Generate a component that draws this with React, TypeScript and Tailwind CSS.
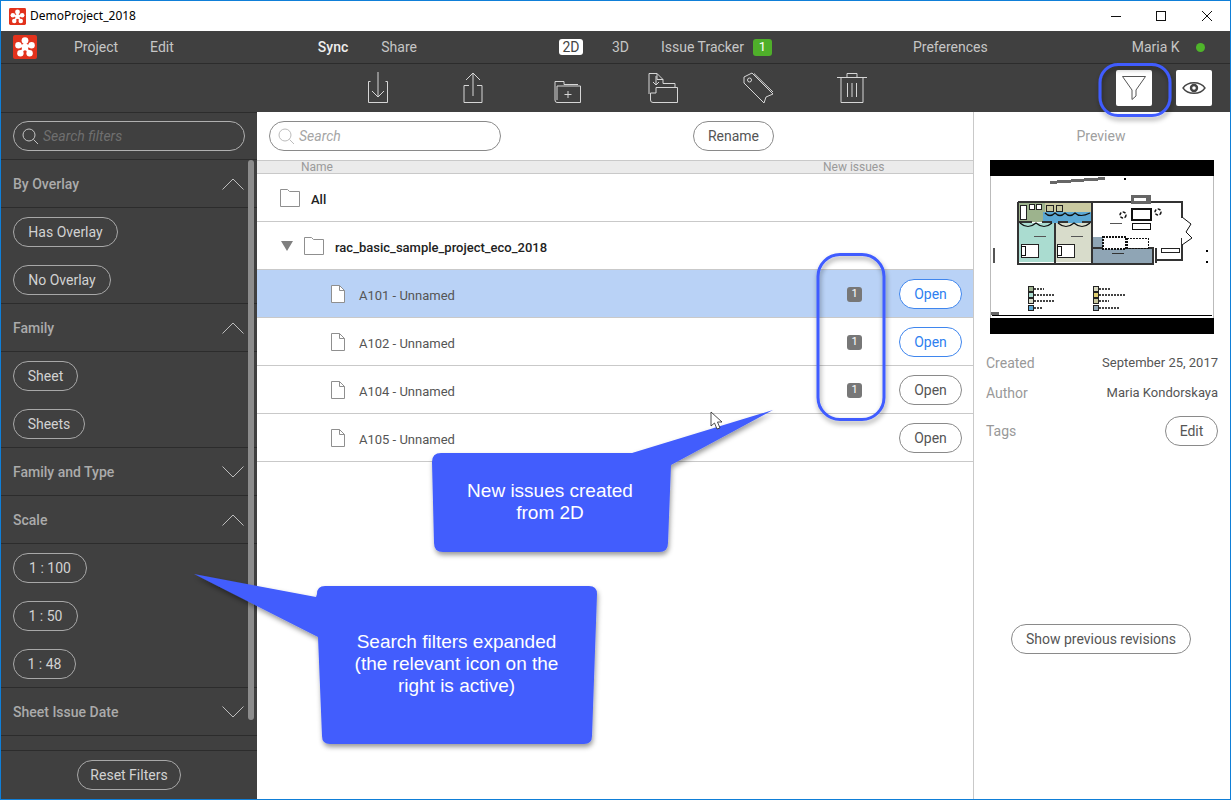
const roboto = { fontFamily: 'Roboto, sans-serif' }

function Logo({ size }: { size: number }) {
  return (
    <svg width={size} height={size} viewBox="0 0 24 24">
      <rect width="24" height="24" rx="2" fill="#e2321c" />
      <g fill="#fff">
        <circle cx="12" cy="5.6" r="3.4" />
        <circle cx="5.4" cy="10.2" r="3.2" />
        <circle cx="18.6" cy="10.2" r="3.2" />
        <circle cx="7.4" cy="18.2" r="3.2" />
        <circle cx="16.6" cy="18.2" r="3.2" />
        <circle cx="12" cy="12" r="3.4" />
      </g>
      <g stroke="#fff" strokeWidth="2.4">
        <path d="M12 12 L12 6 M12 12 L5.5 10 M12 12 L18.5 10 M12 12 L7.5 18 M12 12 L16.5 18" />
      </g>
    </svg>
  )
}

function ToolIcon({ children }: { children: React.ReactNode }) {
  return (
    <div className="w-[94.8px] flex justify-center">
      <svg width="32" height="32" viewBox="0 0 32 32" fill="none" stroke="#d6d6d6" strokeWidth="1">
        {children}
      </svg>
    </div>
  )
}

function Pill({ label, className = '' }: { label: string; className?: string }) {
  return (
    <div className={`h-[30px] inline-flex items-center justify-center rounded-full border border-[#a8a8a8] text-[14px] text-[#d2d2d2] ${className}`}>
      {label}
    </div>
  )
}

function FilterHead({ label, open }: { label: string; open: boolean }) {
  return (
    <div className="h-12 shrink-0 flex items-center pl-[12px] pr-[12px] border-b border-[#2c2c2c]">
      <span className="pt-[1px] text-[14px] font-medium text-[#ababab]">{label}</span>
      <svg className="ml-auto" width="24" height="14" viewBox="0 0 24 14" fill="none" stroke="#bdbdbd" strokeWidth="1">
        <path d={open ? 'M1.5 12.5 L12 2 L22.5 12.5' : 'M1.5 1.5 L12 12 L22.5 1.5'} />
      </svg>
    </div>
  )
}

function FilterOption({ label, width, last }: { label: string; width: string; last?: boolean }) {
  return (
    <div className={`h-12 shrink-0 flex items-center pl-[12px] ${last ? 'pt-[1px] border-b border-[#2c2c2c]' : ''}`}>
      <Pill label={label} className={width} />
    </div>
  )
}

function FolderIcon() {
  return (
    <svg width="20" height="18" viewBox="0 0 20 18" fill="none" stroke="#8f8f8f" strokeWidth="1">
      <path d="M0.5 0.5 H7.5 L9.5 2.5 H19.5 V17.5 H0.5 Z" />
    </svg>
  )
}

function FileIcon() {
  return (
    <svg width="14" height="18" viewBox="0 0 14 18" fill="#fff" stroke="#8f8f8f" strokeWidth="1">
      <path d="M0.5 0.5 H8.5 L13.5 5.5 V17.5 H0.5 Z" />
      <path d="M8.5 0.5 V5.5 H13.5" fill="none" />
    </svg>
  )
}

function SheetRow({ name, issue, active, blue }: { name: string; issue?: boolean; active?: boolean; blue?: boolean }) {
  return (
    <div className={`h-12 shrink-0 flex items-center pt-[1px] border-b border-[#c9c9c9] ${active ? 'bg-[#b9d2f6]' : ''}`}>
      <div className="ml-[74px] flex"><FileIcon /></div>
      <span className="ml-[14px] pt-[3px] text-[13px] text-[#555]">{name}</span>
      <div className="ml-auto w-[15px] h-[15px] mr-[37px] flex items-center justify-center">
        {issue && (
          <span className="w-[15px] h-[15px] rounded-[3px] bg-[#777] text-white text-[11px] flex items-center justify-center">1</span>
        )}
      </div>
      <div className={`w-[63px] h-[30px] mr-[11px] rounded-full border flex items-center justify-center text-[14px] ${blue ? 'border-[#3f86ee] text-[#2f7ff0] bg-white' : 'border-[#8a8a8a] text-[#555]'}`}>
        Open
      </div>
    </div>
  )
}

function SearchGlyph({ color }: { color: string }) {
  return (
    <svg width="17" height="17" viewBox="0 0 17 17" fill="none" stroke={color} strokeWidth="1">
      <circle cx="7" cy="7" r="6" />
      <path d="M11.5 11.5 L16 16" />
    </svg>
  )
}

const legend: [number, number, string, number][] = [
  [38, 126, '#9db38d', 10],
  [38, 132, '#aadcd0', 20],
  [38, 138, '#d8dccb', 20],
  [38, 145, '#5ba8d4', 8],
  [103, 126, '#d8d8c0', 12],
  [103, 132, '#e0cf70', 27],
  [103, 138, '#c9c9a0', 10],
  [103, 145, '#8fa5b5', 20],
]

function Plan() {
  return (
    <svg className="w-[224px] h-[174px] block" viewBox="0 0 224 174" shapeRendering="crispEdges">
      <rect x="0.5" y="0.5" width="223" height="173" fill="#fff" stroke="#bbb" />
      <rect width="224" height="16" fill="#000" />
      <rect y="158" width="224" height="16" fill="#000" />
      <rect y="155" x="2" width="220" height="1" fill="#000" />
      <rect y="152" x="1" width="8" height="3" fill="#666" />
      <path d="M60 21 L115 17 L115 20 L60 24 Z" fill="#666" />
      <rect x="134" y="18" width="2" height="2" fill="#000" />
      <rect x="3" y="88" width="2" height="15" fill="#555" />
      <rect x="216" y="90" width="2" height="2" fill="#000" />
      <rect x="216" y="101" width="2" height="2" fill="#000" />

      <rect x="29" y="43" width="26" height="19" fill="#9db38d" />
      <rect x="55" y="43" width="47" height="10" fill="#c9c9a0" />
      <rect x="53" y="52" width="49" height="11" fill="#5ba8d4" />
      <rect x="29" y="63" width="35" height="39" fill="#aadcd0" />
      <rect x="66" y="63" width="35" height="39" fill="#d8dccb" />
      <rect x="103" y="88" width="60" height="15" fill="#8fa5b5" />
      <rect x="103" y="77" width="10" height="11" fill="#8fa5b5" />
      <g fill="none" stroke="#333" strokeWidth="2">
        <path d="M28 42 H192 V58 M192 78 V100 H166 M166 88 V103" />
        <path d="M28 42 V104 H163 V88 H103" />
        <path d="M65 63 V103 M102 42 V103" />
        <path d="M29 62 H42 M52 62 H62 M68 62 H78 M92 62 H101" strokeWidth="1.5" />
      </g>
      <path d="M192 57 L201 64 L196 72 L202 78 L192 85" fill="#fff" stroke="#111" strokeWidth="1" shapeRendering="auto" />
      <rect x="141" y="35" width="20" height="9" fill="#666" />
      <rect x="144" y="38" width="12" height="3" fill="#fff" />
      <rect x="30" y="45" width="6" height="14" fill="#fff" stroke="#222" />
      <rect x="39" y="44" width="5" height="5" fill="#fff" stroke="#222" />
      <rect x="46" y="44" width="5" height="5" fill="#fff" stroke="#222" />
      <rect x="56" y="45" width="7" height="6" fill="none" stroke="#222" />
      <rect x="66" y="45" width="6" height="6" fill="none" stroke="#222" />
      <path d="M30 63 Q38 70 46 63 Q54 70 62 63 M68 63 Q76 70 84 63 Q92 70 100 63 M55 53 Q60 58 65 53 Q70 58 75 53 Q80 58 85 53 Q90 58 100 53" fill="none" stroke="#111" strokeWidth="1.2" shapeRendering="auto" />
      <rect x="31" y="84" width="17" height="13" fill="#fff" stroke="#222" />
      <rect x="67" y="84" width="17" height="13" fill="#fff" stroke="#222" />
      <rect x="31" y="86" width="4" height="9" fill="none" stroke="#111" />
      <rect x="67" y="86" width="4" height="9" fill="none" stroke="#111" />
      <rect x="142" y="49" width="19" height="11" fill="#fff" stroke="#111" strokeWidth="2" />
      <rect x="142" y="63" width="18" height="6" fill="#fff" stroke="#111" />
      <circle cx="133" cy="55" r="3" fill="none" stroke="#111" strokeWidth="1.5" strokeDasharray="3 1.5" shapeRendering="auto" />
      <circle cx="168" cy="52" r="3" fill="none" stroke="#111" strokeWidth="1.5" strokeDasharray="3 1.5" shapeRendering="auto" />
      <rect x="113" y="77" width="23" height="12" fill="#fff" stroke="#111" strokeWidth="2" strokeDasharray="2 1" />
      <rect x="137" y="78" width="21" height="10" fill="#fff" stroke="#111" strokeDasharray="2 1" />
      <rect x="171" y="88" width="18" height="4" fill="#fff" stroke="#222" />
      <rect x="122" y="93" width="12" height="1" fill="#333" />
      <rect x="44" y="76" width="12" height="1" fill="#555" />
      <rect x="81" y="76" width="12" height="1" fill="#555" />
      <rect x="120" y="63" width="12" height="1" fill="#555" />
      {legend.map(([x, y, c, w]) => (
        <g key={`${x}-${y}`}>
          <rect x={x} y={y} width="5" height="5" fill={c} stroke="#222" />
          <path d={`M${x + 6} ${y + 3} h${w}`} stroke="#444" strokeWidth="2" strokeDasharray="2 1" />
        </g>
      ))}
    </svg>
  )
}

export default function App() {
  return (
    <div className="relative w-[1231px] h-[800px] overflow-hidden bg-white border border-[#0f7fd8] flex flex-col" style={roboto}>
      {/* title bar */}
      <div className="h-[30px] flex items-center pl-2 shrink-0">
        <Logo size={17} />
        <span className="ml-[4px] text-[12px] text-black" style={{ fontFamily: '"Noto Sans", sans-serif' }}>DemoProject_2018</span>
        <svg className="ml-auto mr-[18px]" width="101" height="12" viewBox="0 0 101 12" fill="none" stroke="#111" strokeWidth="1">
          <path d="M0 6.5 H10" />
          <rect x="45.5" y="1.5" width="9" height="9" />
          <path d="M91 1 L101 11 M101 1 L91 11" />
        </svg>
      </div>

      {/* menu */}
      <div className="h-[33px] bg-[#404040] border-b border-[#2c2c2c] flex items-center text-[14px] text-[#c6c6c6] shrink-0">
        <div className="ml-3 flex"><Logo size={24} /></div>
        <span className="ml-[37px]">Project</span>
        <span className="ml-[32px]">Edit</span>
        <span className="ml-[144px] font-medium text-[#eee]">Sync</span>
        <span className="ml-[33px]">Share</span>
        <span className="ml-[142px] w-[24px] h-[16px] rounded-[3px] bg-white text-[#444] flex items-center justify-center">2D</span>
        <span className="ml-[29px]">3D</span>
        <span className="ml-[32px]">Issue Tracker</span>
        <span className="ml-[9px] w-[19px] h-[17px] rounded-[3px] bg-[#4faf2a] text-white text-[13px] flex items-center justify-center">1</span>
        <span className="ml-[141px]">Preferences</span>
        <span className="ml-[144px]">Maria K</span>
        <span className="ml-[16px] w-[9px] h-[9px] rounded-full bg-[#4fb52a]" />
      </div>

      {/* toolbar */}
      <div className="h-[48px] bg-[#404040] flex items-center shrink-0 pl-[330px] pr-[18px]">
        <ToolIcon>
          <path d="M8.5 9.5 H6.5 V30.5 H25.5 V9.5 H23.5" />
          <path d="M16 0 V25 M10 19 L16 25 L22 19" />
        </ToolIcon>
        <ToolIcon>
          <path d="M12 13.5 H7 V30.5 H25 V13.5 H20" />
          <path d="M16 1 V24 M9 8 L16 1 L23 8" />
        </ToolIcon>
        <ToolIcon>
          <path d="M3 28 V9.5 H12 V12.5 H26 M3 28 Q3 30.5 5 30.5 H28.5 V14 H5 V28" />
          <path d="M12.5 22.5 H19.5 M16 19 V26" />
        </ToolIcon>
        <ToolIcon>
          <path d="M2 22 V1.5 H10 L16 7.5 V11.5 H28 V15.5" />
          <path d="M10 1.5 V7.5 H16" />
          <path d="M9 15.5 H30.5 V30.5 H6 Q3.5 30.5 3.5 28 V21 H9 Z" />
          <path d="M9 4 V13 M6 10 L9 13 L12 10" />
        </ToolIcon>
        <ToolIcon>
          <path d="M2 5 L10 1 L31 22 L24 25 L22 31 L2 11 Z" />
          <circle cx="7.5" cy="8" r="2" />
          <path d="M12 1.5 L31 20" />
        </ToolIcon>
        <ToolIcon>
          <path d="M1 5.5 H31 M11 5.5 V1.5 H21 V5.5" />
          <path d="M5 5.5 V30.5 H27 V5.5" />
          <path d="M11.5 11 V25 M16 11 V25 M20.5 11 V25" />
        </ToolIcon>
        <div className="ml-auto w-[36px] h-[36px] bg-white rounded-[2px] flex items-center justify-center">
          <svg width="24" height="24" viewBox="0 0 24 24" fill="none" stroke="#555" strokeWidth="1">
            <path d="M0.5 0.5 H23.5 L14 14 V20 L10 23.5 V14 Z" />
          </svg>
        </div>
        <div className="ml-[24px] w-[36px] h-[36px] bg-white rounded-[2px] flex items-center justify-center">
          <svg width="24" height="16" viewBox="0 0 24 16" fill="none" stroke="#444" strokeWidth="1.3">
            <path d="M1 8 C6 1 18 1 23 8 C18 15 6 15 1 8 Z" />
            <circle cx="12" cy="8" r="3" strokeWidth="2.4" />
          </svg>
        </div>
      </div>

      <div className="flex flex-1 min-h-0">
        {/* filters */}
        <div className="w-[256px] shrink-0 bg-[#404040] flex flex-col relative">
          <div className="h-12 flex items-center pl-3 border-y border-[#2c2c2c] shrink-0">
            <div className="w-[232px] h-[30px] rounded-full border border-[#b0b0b0] flex items-center pl-2 gap-[4px]">
              <SearchGlyph color="#c4c4c4" />
              <span className="text-[14px] italic text-[#6f6f6f]">Search filters</span>
            </div>
          </div>
          <FilterHead label="By Overlay" open />
          <FilterOption label="Has Overlay" width="w-[105px]" />
          <FilterOption label="No Overlay" width="w-[98px]" last />
          <FilterHead label="Family" open />
          <FilterOption label="Sheet" width="w-[65px]" />
          <FilterOption label="Sheets" width="w-[72px]" last />
          <FilterHead label="Family and Type" open={false} />
          <FilterHead label="Scale" open />
          <FilterOption label="1 : 100" width="w-[74px]" />
          <FilterOption label="1 : 50" width="w-[65px]" />
          <FilterOption label="1 : 48" width="w-[63px]" last />
          <FilterHead label="Sheet Issue Date" open={false} />
          <div className="flex-1 border-b border-[#2c2c2c]" />
          <div className="h-12 flex items-center justify-center shrink-0">
            <Pill label="Reset Filters" className="w-[104px]" />
          </div>
          <div className="absolute left-[247px] top-[48px] w-[6px] h-[560px] rounded-[3px] bg-[#8c8c8c]" />
        </div>

        {/* sheet list */}
        <div className="w-[717px] shrink-0 flex flex-col border-r border-[#c9c9c9]">
          <div className="h-12 flex items-center pl-3 shrink-0">
            <div className="w-[232px] h-[30px] rounded-full border border-[#8a8a8a] flex items-center pl-2 gap-[4px]">
              <SearchGlyph color="#bcbcbc" />
              <span className="text-[14px] italic text-[#a5a5a5]">Search</span>
            </div>
            <div className="ml-[192px] w-[81px] h-[30px] rounded-full border border-[#8a8a8a] flex items-center justify-center text-[14px] text-[#555]">
              Rename
            </div>
          </div>
          <div className="h-[14px] bg-[#ebebeb] border-y border-[#c9c9c9] flex items-center text-[12px] text-[#9a9a9a] shrink-0">
            <span className="ml-[44px]">Name</span>
            <span className="ml-[490px]">New issues</span>
          </div>
          <div className="h-12 flex items-center border-b border-[#c9c9c9] pl-[23px] shrink-0">
            <FolderIcon />
            <span className="ml-[11px] pt-[4px] text-[13px] font-medium text-[#222]">All</span>
          </div>
          <div className="h-12 flex items-center border-b border-[#c9c9c9] pl-[24px] shrink-0">
            <svg width="12" height="10" viewBox="0 0 12 10"><path d="M0 0 H12 L6 10 Z" fill="#808080" /></svg>
            <div className="ml-[11px] flex"><FolderIcon /></div>
            <span className="ml-[11px] pt-[4px] text-[13px] font-medium text-[#222]">rac_basic_sample_project_eco_2018</span>
          </div>
          <SheetRow name="A101 - Unnamed" issue active blue />
          <SheetRow name="A102 - Unnamed" issue blue />
          <SheetRow name="A104 - Unnamed" issue />
          <SheetRow name="A105 - Unnamed" />
        </div>

        {/* preview */}
        <div className="flex-1 flex flex-col text-[14px]">
          <div className="h-12 flex items-center justify-center text-[#a0a0a0] shrink-0 pr-[2px]">Preview</div>
          <div className="ml-[16px]"><Plan /></div>
          <div className="mt-[14px] h-[30px] flex items-center justify-between pl-[12px] pr-[12px] text-[#555]">
            <span className="text-[#999]">Created</span>
            <span className="text-[13px]">September 25, 2017</span>
          </div>
          <div className="h-[30px] flex items-center justify-between pl-[12px] pr-[12px] text-[#555]">
            <span className="text-[#999]">Author</span>
            <span className="text-[13px]">Maria Kondorskaya</span>
          </div>
          <div className="mt-[8px] h-[30px] flex items-center justify-between pl-[12px] pr-[12px]">
            <span className="text-[#999]">Tags</span>
            <div className="w-[53px] h-[30px] rounded-full border border-[#8a8a8a] flex items-center justify-center text-[#555]">Edit</div>
          </div>
          <div className="mt-[178px] flex justify-center pr-[2px]">
            <div className="w-[180px] h-[30px] rounded-full border border-[#8a8a8a] flex items-center justify-center text-[#555]">
              Show previous revisions
            </div>
          </div>
        </div>
      </div>

      {/* annotations laid over the screenshot */}
      <svg className="absolute -left-px -top-px pointer-events-none" width="1231" height="800" fill="none">
        <defs>
          <filter id="drop" x="-20%" y="-20%" width="140%" height="140%">
            <feDropShadow dx="1" dy="3" stdDeviation="2.5" floodColor="#000" floodOpacity="0.4" />
          </filter>
        </defs>
        <g filter="url(#drop)">
          <path
            d="M441 453 H632 L773 410 L671 465 L668 543 Q668 552 659 552 H443 Q434 552 434 543 L432 462 Q432 453 441 453 Z"
            fill="#425dfd"
          />
          <path
            d="M325 586 H589 Q597 586 597 594 L592 736 Q592 744 584 744 H330 Q322 744 322 736 L318 637 L194 574 L316 597 L317 594 Q317 586 325 586 Z"
            fill="#425dfd"
          />
          <rect x="818" y="254.5" width="66" height="165" rx="22" stroke="#3f5cff" strokeWidth="3" />
          <rect x="1100" y="64.5" width="70" height="51" rx="18" stroke="#3f5cff" strokeWidth="3" />
        </g>
        <path d="M711 412 V426 L714.5 423 L717 429 L720 428 L717.5 422 L722 422 Z" fill="#fff" stroke="#222" strokeWidth="0.8" />
      </svg>
      <div className="absolute left-[432px] top-[479px] w-[234px] text-center text-[19px] leading-[22px] text-white" style={{ fontFamily: '"Liberation Sans", sans-serif' }}>
        New issues created<br />from 2D
      </div>
      <div className="absolute left-[318px] top-[630px] w-[275px] text-center text-[19px] leading-[22px] text-white" style={{ fontFamily: '"Liberation Sans", sans-serif' }}>
        Search filters expanded<br />(the relevant icon on the<br />right is active)
      </div>
    </div>
  )
}
